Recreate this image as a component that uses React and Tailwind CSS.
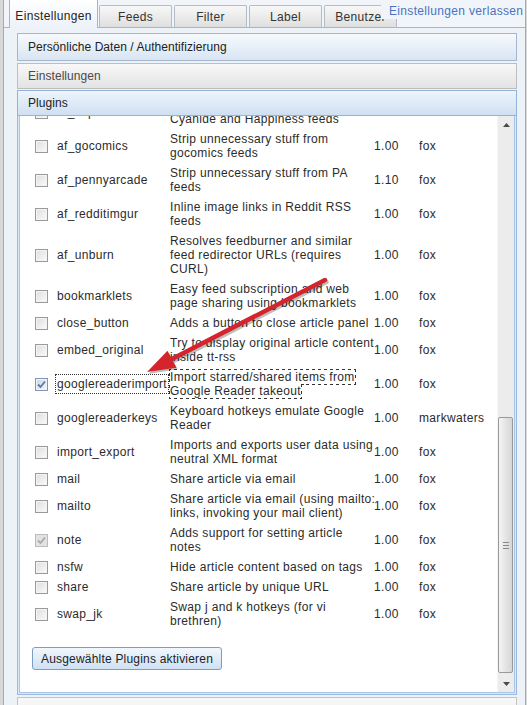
import React from "react";

const rows = [
  { name: "af_explosm", desc: ["Strip unnecessary stuff from", "Cyanide and Happiness feeds"], v: "1.00", a: "fox" },
  { name: "af_gocomics", desc: ["Strip unnecessary stuff from", "gocomics feeds"], v: "1.00", a: "fox" },
  { name: "af_pennyarcade", desc: ["Strip unnecessary stuff from PA", "feeds"], v: "1.10", a: "fox" },
  { name: "af_redditimgur", desc: ["Inline image links in Reddit RSS", "feeds"], v: "1.00", a: "fox" },
  { name: "af_unburn", desc: ["Resolves feedburner and similar", "feed redirector URLs (requires", "CURL)"], v: "1.00", a: "fox" },
  { name: "bookmarklets", desc: ["Easy feed subscription and web", "page sharing using bookmarklets"], v: "1.00", a: "fox" },
  { name: "close_button", desc: ["Adds a button to close article panel"], v: "1.00", a: "fox" },
  { name: "embed_original", desc: ["Try to display original article content", "inside tt-rss"], v: "1.00", a: "fox" },
  { name: "googlereaderimport", desc: ["Import starred/shared items from", "Google Reader takeout"], v: "1.00", a: "fox", checked: true, focus: true },
  { name: "googlereaderkeys", desc: ["Keyboard hotkeys emulate Google", "Reader"], v: "1.00", a: "markwaters" },
  { name: "import_export", desc: ["Imports and exports user data using", "neutral XML format"], v: "1.00", a: "fox" },
  { name: "mail", desc: ["Share article via email"], v: "1.00", a: "fox" },
  { name: "mailto", desc: ["Share article via email (using mailto:", "links, invoking your mail client)"], v: "1.00", a: "fox" },
  { name: "note", desc: ["Adds support for setting article", "notes"], v: "1.00", a: "fox", checked: true, disabled: true },
  { name: "nsfw", desc: ["Hide article content based on tags"], v: "1.00", a: "fox" },
  { name: "share", desc: ["Share article by unique URL"], v: "1.00", a: "fox" },
  { name: "swap_jk", desc: ["Swap j and k hotkeys (for vi", "brethren)"], v: "1.00", a: "fox" },
];

function Box({ checked, disabled }) {
  if (disabled) {
    return (
      <span className="block w-[13px] h-[13px] border border-[#bcbcbc] bg-[#e2e2e2]">
        {checked && (
          <svg width="11" height="11" viewBox="0 0 11 11" className="block">
            <path d="M2 5.5 L4.5 8 L9 2.5" fill="none" stroke="#a9a9a9" strokeWidth="1.8" />
          </svg>
        )}
      </span>
    );
  }
  return (
    <span
      className={`block w-[13px] h-[13px] border ${
        checked ? "border-[#7f96b6] bg-gradient-to-br from-[#c9d6e6] to-[#f4f8fc]" : "border-[#9a9a9a] bg-gradient-to-br from-[#dedede] to-[#fbfbfb]"
      } shadow-[inset_0_0_0_1px_#f4f4f4]`}
    >
      {checked && (
        <svg width="11" height="11" viewBox="0 0 11 11" className="block">
          <path d="M2 5.5 L4.5 8 L9 2.5" fill="none" stroke="#5a78a6" strokeWidth="1.8" />
        </svg>
      )}
    </span>
  );
}

function Row({ r }) {
  return (
    <div className="grid grid-cols-[37px_113px_204px_45px_1fr] items-center">
      <div className="py-[3px] pl-[15px]">
        <Box checked={r.checked} disabled={r.disabled} />
      </div>
      <div className="py-[3px] whitespace-nowrap">
        {r.focus ? (
          <span className="inline-block -ml-[1px] px-[1px] py-[2px] [outline:1px_dotted_#333]">{r.name}</span>
        ) : (
          r.name
        )}
      </div>
      <div className="py-[3px] whitespace-nowrap">
        {r.focus ? (
          <span className="[outline:1px_dotted_#333]">
            {r.desc.map((l, i) => (
              <React.Fragment key={i}>
                {i > 0 && <br />}
                {l}
              </React.Fragment>
            ))}
          </span>
        ) : (
          r.desc.map((l, i) => <div key={i}>{l}</div>)
        )}
      </div>
      <div className="py-[3px]">{r.v}</div>
      <div className="py-[3px] whitespace-nowrap">{r.a}</div>
    </div>
  );
}

function Tab({ children }) {
  return (
    <div className="h-[22px] w-[73px] ml-[2px] first:ml-[1px] border-t border-x border-[#b3bcc8] rounded-t-[2px] bg-gradient-to-b from-[#f8f8f8] to-[#dfdfdf] flex items-center justify-center text-[#333]">
      {children}
    </div>
  );
}

export default function App() {
  return (
    <div className="relative w-[527px] h-[705px] overflow-hidden bg-[#d8d8d8] pl-[3px] pr-[1px] font-['Liberation_Sans',Arial,sans-serif] text-[12px] leading-[14px] tracking-[0.33px] text-[#2b2b2b]">
      <div className="h-full border-x border-[#a9a9a9] bg-[#edf2f9] flex flex-col">
        {/* tab strip */}
        <div className="flex items-end h-[28px] pl-[5px] border-b border-[#aab6c5] bg-[#f1f5fa] shrink-0">
          <div className="-mb-px h-[29px] w-[89px] border-x border-[#aab4c2] bg-gradient-to-b from-[#ffffff] to-[#edf2f9] text-center pt-[10px] text-[#222]">
            Einstellungen
          </div>
          <div className="flex items-end">
            <Tab>Feeds</Tab>
            <Tab>Filter</Tab>
            <Tab>Label</Tab>
            <Tab>Benutzer</Tab>
          </div>
        </div>

        {/* accordion */}
        <div className="ml-[13px] w-[500px] mt-[5px] flex flex-col">
          <div className="h-[28px] border border-[#a3b8d0] bg-gradient-to-b from-[#f7fafd] to-[#d9e5f3] flex items-center pl-[10px] text-[#222] tracking-[0.05px]">
            Persönliche Daten / Authentifizierung
          </div>
          <div className="mt-[2px] h-[26px] border border-[#bdbdbd] bg-gradient-to-b from-[#f8f8f8] to-[#e3e3e3] flex items-center pl-[10px] text-[#4a4a4a] tracking-[0.05px]">
            Einstellungen
          </div>
          <div className="mt-[1px] h-[26px] border border-[#93b4da] bg-gradient-to-b from-[#edf4fc] to-[#cfe0f3] flex items-center pl-[10px] text-[#222] tracking-[0.05px]">
            Plugins
          </div>
          {/* plugins pane */}
          <div className="border-x border-b border-[#99badf] bg-[#dbe8f6] px-[1px] pb-[1px]">
            <div className="border-x border-b border-[#a9c4e4] bg-white h-[577px] flex">
              <div className="flex-1 overflow-hidden">
                <div className="-mt-[21px]">
                  {rows.map((r) => (
                    <Row key={r.name} r={r} />
                  ))}
                </div>
                <button className="mt-[16px] ml-[12px] h-[23px] w-[190px] rounded-[3px] border border-[#7f9cc4] bg-gradient-to-b from-[#f1f7fd] to-[#cfe1f4] text-[#222] text-[12px] leading-[14px] tracking-[0.2px] font-['Liberation_Sans',Arial,sans-serif]">
                  Ausgewählte Plugins aktivieren
                </button>
              </div>
              {/* scrollbar */}
              <div className="w-[17px] h-[576px] bg-[#ececec] border-l border-[#f6f6f6] flex flex-col">
                <div className="h-[17px] flex items-center justify-center">
                  <svg width="7" height="4" viewBox="0 0 7 4">
                    <path d="M0 4 L3.5 0 L7 4 Z" fill="#4a4a4a" />
                  </svg>
                </div>
                <div className="flex-1">
                  <div className="mt-[284px] h-[256px] w-[15px] rounded-[2px] border border-[#999999] bg-gradient-to-r from-[#f4f4f4] to-[#d6d6d6] flex flex-col items-center justify-center gap-[2px]">
                    <span className="block w-[6px] h-px bg-[#8a8a8a]" />
                    <span className="block w-[6px] h-px bg-[#8a8a8a]" />
                    <span className="block w-[6px] h-px bg-[#8a8a8a]" />
                  </div>
                </div>
                <div className="h-[17px] flex items-center justify-center">
                  <svg width="7" height="4" viewBox="0 0 7 4">
                    <path d="M0 0 L3.5 4 L7 0 Z" fill="#4a4a4a" />
                  </svg>
                </div>
              </div>
            </div>
          </div>
          <div className="mt-[2px] h-[30px] border border-[#c4c4c4] bg-gradient-to-b from-[#f8f8f8] to-[#ececec]" />
        </div>
      </div>

      {/* exit link overlaying the tab strip */}
      <div className="absolute top-0 left-[381px] right-[3px] h-[19px] bg-[#f1f5fa] pl-[8px] pt-[4px] text-[#4d72c0] whitespace-nowrap">
        Einstellungen verlassen
      </div>

      {/* red annotation arrow */}
      <svg className="absolute left-0 top-0 pointer-events-none" width="527" height="705" viewBox="0 0 527 705">
        <g transform="translate(1.5 2)" opacity="0.25">
          <path d="M325 280 L172 359" stroke="#000" strokeWidth="4.5" strokeLinecap="round" fill="none" />
          <path d="M147 372 L176 367.3 L167.8 351.3 Z" fill="#000" />
        </g>
        <path d="M325 280 L172 359" stroke="#d3252b" strokeWidth="4.5" strokeLinecap="round" fill="none" />
        <path d="M147 372 L176.5 367.8 L167.5 350.8 Z" fill="#d3252b" />
      </svg>
    </div>
  );
}
